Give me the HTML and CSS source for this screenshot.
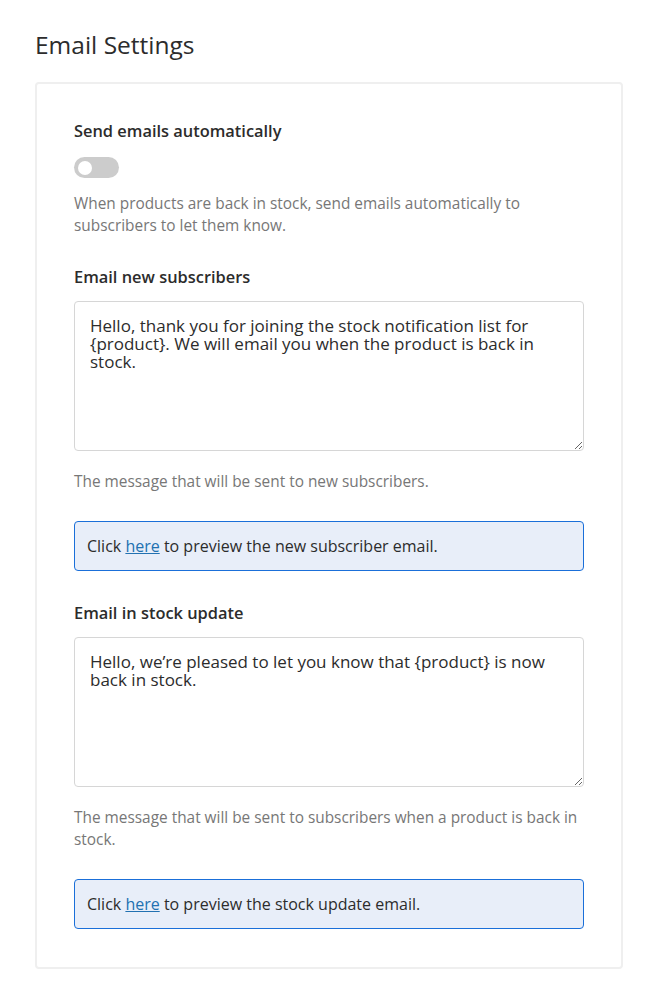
FILE: index.html
```html
<!DOCTYPE html>
<html lang="en">
<head>
    <meta charset="UTF-8">
    <meta name="viewport" content="width=device-width, initial-scale=1.0">
    <title>Email Settings</title>
    <link rel="stylesheet" href="styles.css">
</head>
<body>
    <h1 class="page-title">Email Settings</h1>

    <div class="card">
        <!-- auto send -->
        <div class="field">
            <label class="field-label">Send emails automatically</label>
            <span class="toggle"><span class="toggle-knob"></span></span>
            <p class="help">When products are back in stock, send emails automatically to subscribers to let them know.</p>
        </div>

        <!-- new subscribers -->
        <div class="field">
            <label class="field-label" for="newSub">Email new subscribers</label>
            <textarea id="newSub" class="message">Hello, thank you for joining the stock notification list for {product}. We will email you when the product is back in stock.</textarea>
            <p class="help">The message that will be sent to new subscribers.</p>
            <div class="notice">Click <a href="#">here</a> to preview the new subscriber email.</div>
        </div>

        <!-- stock update -->
        <div class="field">
            <label class="field-label" for="stockUpdate">Email in stock update</label>
            <textarea id="stockUpdate" class="message">Hello, we’re pleased to let you know that {product} is now back in stock.</textarea>
            <p class="help">The message that will be sent to subscribers when a product is back in stock.</p>
            <div class="notice">Click <a href="#">here</a> to preview the stock update email.</div>
        </div>
    </div>
</body>
</html>
```
FILE: styles.css
```css
body {
    margin: 0;
    padding: 27px 35px 20px;
    font-family: "Open Sans", "Noto Sans", sans-serif;
    color: #2c3338;
    background-color: #fff;
}

.page-title {
    font-size: 24.5px;
    font-weight: 500;
    line-height: 36px;
    margin: 0 0 19px;
    color: #2c2c2c;
}

.card {
    border: 2px solid #efefef;
    border-radius: 4px;
    padding: 36px 37px 38px;
}

.field {
    display: flex;
    flex-direction: column;
    align-items: flex-start;
    margin-bottom: 31px;
}

.field:first-child {
    margin-bottom: 29px;
}

.field:last-child {
    margin-bottom: 0;
}

.field-label {
    font-size: 16.4px;
    font-weight: 600;
    line-height: 22px;
    color: #2c2c2c;
    margin-bottom: 13px;
}

.field:first-child .field-label {
    margin-bottom: 15px;
}

/* toggle */
.toggle {
    width: 45px;
    height: 21px;
    border-radius: 11px;
    background-color: #cccccc;
    display: flex;
    align-items: center;
    padding-left: 4px;
    box-sizing: border-box;
}

.toggle-knob {
    width: 14px;
    height: 14px;
    border-radius: 50%;
    background-color: #fff;
}

.help {
    font-size: 15.4px;
    line-height: 22.5px;
    color: #777;
    margin: 15px 0 0;
}

.field:first-child .help {
    line-height: 22px;
}

.message {
    width: 100%;
    height: 150px;
    box-sizing: border-box;
    border: 1px solid #d6d6d6;
    border-radius: 4px;
    padding: 15px 15px;
    font-family: inherit;
    font-size: 17px;
    line-height: 18px;
    color: #2c2c2c;
}

.message + .help {
    margin-top: 20px;
}

.notice {
    width: 100%;
    box-sizing: border-box;
    margin-top: 27px;
    padding: 12px 12px;
    border: 1px solid #1a6fd9;
    border-radius: 4px;
    background-color: #e8eef9;
    font-size: 16px;
    line-height: 24px;
    color: #2c2c2c;
}

.notice a {
    color: #2271b1;
}
```
